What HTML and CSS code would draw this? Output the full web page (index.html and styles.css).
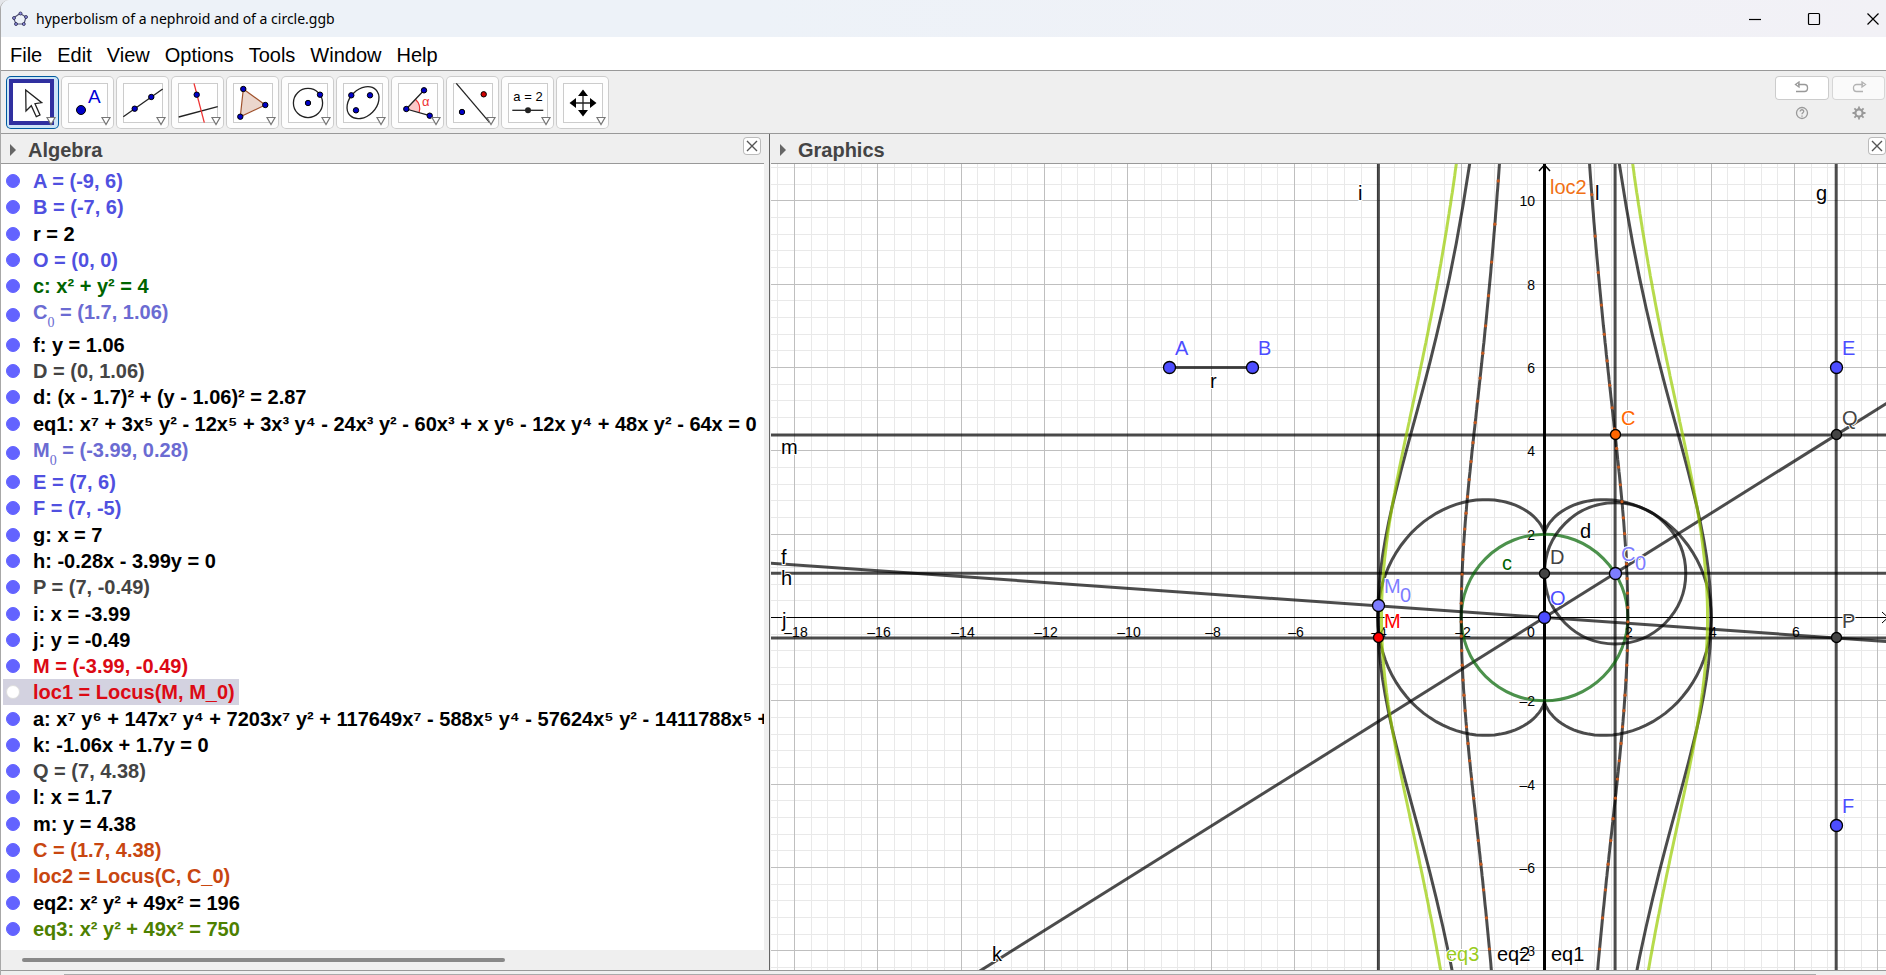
FILE: index.html
```html
<!DOCTYPE html>
<html lang="en">
<head>
<meta charset="utf-8">
<title>hyperbolism of a nephroid and of a circle.ggb</title>
<link rel="stylesheet" href="styles.css">
</head>
<body>
<div class="window">
  <header class="titlebar">
    <svg class="app-icon" width="18" height="18" viewBox="0 0 18 18" aria-hidden="true">
      <path d="M9 3.500 15 7l-2 7H5L2.500 8z" fill="none" stroke="#555577" stroke-width="1.200"/>
      <g fill="#8f8fe0" stroke="#26264d" stroke-width="0.800"><circle cx="9.500" cy="3.500" r="1.500"/><circle cx="15" cy="7" r="1.500"/><circle cx="12.800" cy="14" r="1.500"/><circle cx="5" cy="14" r="1.500"/><circle cx="3" cy="8" r="1.500"/></g>
    </svg>
    <h1 class="title">hyperbolism of a nephroid and of a circle.ggb</h1>
    <div class="controls">
      <button class="control" aria-label="Minimize"><svg width="14" height="14"><path d="M1 7.500h12"/></svg></button>
      <button class="control" aria-label="Maximize"><svg width="14" height="14"><rect x="1.500" y="1.500" width="11" height="11" rx="1"/></svg></button>
      <button class="control" aria-label="Close"><svg width="14" height="14"><path d="M1.500 1.500l11 11M12.500 1.500l-11 11"/></svg></button>
    </div>
  </header>

  <nav class="menu">
    <button>File</button><button>Edit</button><button>View</button><button>Options</button><button>Tools</button><button>Window</button><button>Help</button>
  </nav>

  <div class="toolbar">
    <div class="tools">
      <button class="tool selected" aria-label="Move"><svg viewBox="0 0 53 53"><rect x="5" y="5" width="41" height="42" fill="#fff" stroke="#3030a0" stroke-width="4"/><path d="M19.700 14 35.700 26.700 29 27.700 34 39 30.300 40.700 25.300 29.700 20 35z" fill="#fff" stroke="#222" stroke-width="1.300"/><use href="#drop"/></svg></button>
      <button class="tool" aria-label="Point"><svg viewBox="0 0 53 53"><use href="#frame"/><circle class="dot" cx="20" cy="34" r="4.500"/><text x="27" y="27" class="big-a">A</text><use href="#drop"/></svg></button>
      <button class="tool" aria-label="Line"><svg viewBox="0 0 53 53"><use href="#frame"/><path class="ink" d="M7.300 40.700 46.700 13"/><circle class="dot" cx="18.700" cy="32.700" r="2.700"/><circle class="dot" cx="35.300" cy="21" r="2.700"/><use href="#drop"/></svg></button>
      <button class="tool" aria-label="Perpendicular line"><svg viewBox="0 0 53 53"><use href="#frame"/><path class="ink" d="M7.700 41 46.700 30.700"/><path d="M23 7.300 33.300 46.700" stroke="#e33" stroke-width="1.300"/><circle class="dot" cx="25.700" cy="18.700" r="2.700"/><use href="#drop"/></svg></button>
      <button class="tool" aria-label="Polygon"><svg viewBox="0 0 53 53"><use href="#frame"/><path d="M17.300 13 39.300 29 14.300 40.700z" fill="#ebd6cc" stroke="#a0522d" stroke-width="1.200"/><circle class="dot" cx="17.300" cy="13" r="2.700"/><circle class="dot" cx="39.300" cy="29" r="2.700"/><circle class="dot" cx="14.300" cy="40.700" r="2.700"/><use href="#drop"/></svg></button>
      <button class="tool" aria-label="Circle"><svg viewBox="0 0 53 53"><use href="#frame"/><circle class="ink" cx="27" cy="27" r="14.600"/><circle class="dot" cx="27" cy="27" r="2.700"/><circle class="dot" cx="39" cy="18.700" r="2.700"/><use href="#drop"/></svg></button>
      <button class="tool" aria-label="Ellipse"><svg viewBox="0 0 53 53"><use href="#frame"/><ellipse class="ink" cx="27" cy="26.700" rx="18.200" ry="13.400" transform="rotate(-45 27 26.700)"/><circle class="dot" cx="15.300" cy="19.300" r="2.700"/><circle class="dot" cx="34" cy="19.300" r="2.700"/><circle class="dot" cx="20" cy="34.300" r="2.700"/><use href="#drop"/></svg></button>
      <button class="tool" aria-label="Angle"><svg viewBox="0 0 53 53"><use href="#frame"/><path d="M15.300 33 24.400 23.300A13.300 13.300 0 0 1 28.100 36.700z" fill="#fcc8c8"/><path d="M24.400 23.300A13.300 13.300 0 0 1 28.100 36.700" fill="none" stroke="#e33" stroke-width="1.200"/><path class="ink" d="M33 14.300 15.300 33 38.700 39.700"/><circle class="dot" cx="15.300" cy="33" r="2.700"/><circle class="dot" cx="33" cy="14.300" r="2.700"/><circle class="dot" cx="38.700" cy="39.700" r="2.700"/><text x="31" y="30" class="alpha">α</text><use href="#drop"/></svg></button>
      <button class="tool" aria-label="Reflect about line"><svg viewBox="0 0 53 53"><use href="#frame"/><path class="ink" d="M10.300 7.300 43.700 46.700"/><circle class="dot" cx="16" cy="36" r="2.700"/><circle class="dot red" cx="37.700" cy="18.300" r="2.700"/><use href="#drop"/></svg></button>
      <button class="tool" aria-label="Slider"><svg viewBox="0 0 53 53"><use href="#frame"/><text x="27" y="25" class="slider-text">a = 2</text><path class="ink" d="M11.300 34.300H42.300"/><circle cx="27" cy="34.300" r="3" fill="#222"/><use href="#drop"/></svg></button>
      <button class="tool" aria-label="Move graphics view"><svg viewBox="0 0 53 53"><use href="#frame"/><path class="ink" d="M27 18v18M18 27h18"/><path d="M27 13.500l5 6.500H22zM27 40.500l5-6.500H22zM13.500 27l6.500-5v10zM40.500 27l-6.500-5v10z"/><use href="#drop"/></svg></button>
    </div>
    <div class="actions">
      <button class="action" aria-label="Undo"><svg width="16" height="14"><path d="M4 3.500h6.500a3 3 0 0 1 3 3v1a3 3 0 0 1-3 3H2M5 1v5L1.500 3.500z"/></svg></button>
      <button class="action faded" aria-label="Redo"><svg width="16" height="14"><path d="M12 3.500H5.500a3 3 0 0 0-3 3v1a3 3 0 0 0 3 3H12M11 1v5l3.500-2.500z"/></svg></button>
      <button class="action plain" aria-label="Help"><svg width="14" height="14"><circle cx="7" cy="7" r="5.500"/><path d="M5.200 5.500c0-2.500 3.700-2.200 3.500 0-.1 1.300-1.700 1.300-1.700 2.800M7 9.500v1.200"/></svg></button>
      <button class="action plain" aria-label="Settings"><svg width="14" height="14"><circle cx="7" cy="7" r="3.600" stroke-width="2.200"/><path d="M7 .5v2.500M7 11v2.500M.5 7H3M11 7h2.500M2.400 2.400l1.800 1.800M9.800 9.800l1.800 1.800M2.400 11.600l1.800-1.800M9.800 4.200l1.800-1.800" stroke-width="1.800"/></svg></button>
    </div>
  </div>

  <main class="views">
    <section class="algebra">
      <div class="view-head"><button class="expand" aria-label="Toggle style bar"></button><h2>Algebra</h2><button class="close" aria-label="Close Algebra"><svg width="14" height="14"><path d="M2 2l10 10M12 2L2 12"/></svg></button></div>
      <ul class="list">
        <li class="blue"><label><input type="checkbox" checked><span>A = (-9, 6)</span></label></li>
        <li class="blue"><label><input type="checkbox" checked><span>B = (-7, 6)</span></label></li>
        <li><label><input type="checkbox" checked><span>r = 2</span></label></li>
        <li class="blue"><label><input type="checkbox" checked><span>O = (0, 0)</span></label></li>
        <li class="green"><label><input type="checkbox" checked><span>c: x² + y² = 4</span></label></li>
        <li class="soft tall"><label><input type="checkbox" checked><span>C<sub>0</sub> = (1.7, 1.06)</span></label></li>
        <li><label><input type="checkbox" checked><span>f: y = 1.06</span></label></li>
        <li class="gray"><label><input type="checkbox" checked><span>D = (0, 1.06)</span></label></li>
        <li><label><input type="checkbox" checked><span>d: (x - 1.7)² + (y - 1.06)² = 2.87</span></label></li>
        <li><label><input type="checkbox" checked><span>eq1: x⁷ + 3x⁵ y² - 12x⁵ + 3x³ y⁴ - 24x³ y² - 60x³ + x y⁶ - 12x y⁴ + 48x y² - 64x = 0</span></label></li>
        <li class="soft tall"><label><input type="checkbox" checked><span>M<sub>0</sub> = (-3.99, 0.28)</span></label></li>
        <li class="blue"><label><input type="checkbox" checked><span>E = (7, 6)</span></label></li>
        <li class="blue"><label><input type="checkbox" checked><span>F = (7, -5)</span></label></li>
        <li><label><input type="checkbox" checked><span>g: x = 7</span></label></li>
        <li><label><input type="checkbox" checked><span>h: -0.28x - 3.99y = 0</span></label></li>
        <li class="gray"><label><input type="checkbox" checked><span>P = (7, -0.49)</span></label></li>
        <li><label><input type="checkbox" checked><span>i: x = -3.99</span></label></li>
        <li><label><input type="checkbox" checked><span>j: y = -0.49</span></label></li>
        <li class="red"><label><input type="checkbox" checked><span>M = (-3.99, -0.49)</span></label></li>
        <li class="red current"><label><input type="checkbox"><span>loc1 = Locus(M, M_0)</span></label></li>
        <li><label><input type="checkbox" checked><span>a: x⁷ y⁶ + 147x⁷ y⁴ + 7203x⁷ y² + 117649x⁷ - 588x⁵ y⁴ - 57624x⁵ y² - 1411788x⁵ +</span></label></li>
        <li><label><input type="checkbox" checked><span>k: -1.06x + 1.7y = 0</span></label></li>
        <li class="gray"><label><input type="checkbox" checked><span>Q = (7, 4.38)</span></label></li>
        <li><label><input type="checkbox" checked><span>l: x = 1.7</span></label></li>
        <li><label><input type="checkbox" checked><span>m: y = 4.38</span></label></li>
        <li class="orange"><label><input type="checkbox" checked><span>C = (1.7, 4.38)</span></label></li>
        <li class="orange"><label><input type="checkbox" checked><span>loc2 = Locus(C, C_0)</span></label></li>
        <li><label><input type="checkbox" checked><span>eq2: x² y² + 49x² = 196</span></label></li>
        <li class="olive"><label><input type="checkbox" checked><span>eq3: x² y² + 49x² = 750</span></label></li>
      </ul>
      <div class="scroll"><div class="thumb"></div></div>
    </section>

    <section class="graphics">
      <div class="view-head"><button class="expand" aria-label="Toggle style bar"></button><h2>Graphics</h2><button class="close" aria-label="Close Graphics"><svg width="14" height="14"><path d="M2 2l10 10M12 2L2 12"/></svg></button></div>
      <svg class="plot" id="plot" role="img" aria-label="Coordinate plane">
        <g transform="translate(773 453)">
          <g id="grid"></g>
          <g id="ticks"></g>
          <g id="curves" transform="translate(.5 .5)"></g>
          <g id="points" transform="translate(.5 .5)"></g>
          <g id="labels"></g>
        </g>
      </svg>
    </section>
  </main>
  <footer class="bottom"><div></div></footer>
</div>

<svg width="0" height="0" class="defs" aria-hidden="true">
  <defs>
    <rect id="frame" x="7.500" y="7.500" width="39" height="39" fill="#fff" stroke="#ccc"/>
    <path id="drop" d="M41 41.500h8l-4 7z" fill="#fff" stroke="#777" stroke-width="1.200"/>
  </defs>
</svg>
<script src="plot.js"></script>
</body>
</html>
```

FILE: styles.css
```css
* { box-sizing: border-box; }

body {
  margin: 0;
  background: #e4e6ea;
  color: #000;
  font-family: "Liberation Sans", Arial, sans-serif;
  font-size: 20px;
}

button { padding: 0; border: 0; background: none; color: inherit; font: inherit; }
h1, h2, ul { margin: 0; padding: 0; }
.defs { position: absolute; }

.window {
  display: flex;
  flex-direction: column;
  height: 100vh;
  border-left: 1px solid #a8a8a8;
  border-top-left-radius: 9px;
  background: #efefef;
  overflow: hidden;
}

/* Title bar */
.titlebar {
  display: flex;
  align-items: center;
  height: 37px;
  flex: none;
  padding-left: 10px;
  background: linear-gradient(90deg, #edf2f8 40%, #f2f1f6);
}
.title {
  flex: 1;
  margin-left: 7px;
  font: 400 14px/20px "Noto Sans", "Open Sans", sans-serif;
}
.controls { display: flex; gap: 45px; padding-right: 6px; }
.control { display: flex; }
.control svg { fill: none; stroke: #000; stroke-width: 1.2; }

.menu {
  display: flex;
  gap: 15px;
  height: 33px;
  flex: none;
  padding: 3px 0 0 9px;
  background: #fff;
}

/* Toolbar */
.toolbar {
  display: flex;
  justify-content: space-between;
  flex: none;
  padding: 5px 1px 4px 5px;
  border: 1px solid #999;
  border-width: 1px 0;
}
.tools { display: flex; gap: 2px; }
.tool {
  width: 53px;
  height: 53px;
  border-radius: 5px;
  background: #fdfdfd;
  box-shadow: inset 0 0 0 1px #ccc;
}
.tool.selected { background: #cce4f7; box-shadow: inset 0 0 0 1px #005a9e; }
.tool svg { display: block; width: 100%; height: 100%; }
.ink { fill: none; stroke: #222; stroke-width: 1.3; }
.dot { fill: #0000c8; stroke: #000; }
.dot.red { fill: #d00000; }
.big-a { font-size: 19px; fill: #0000d8; }
.alpha { font-size: 13px; fill: #e33; }
.slider-text { font-size: 13px; text-anchor: middle; }

.actions {
  display: grid;
  grid-template-columns: 54px 53px;
  grid-template-rows: 24px 26px;
  column-gap: 3px;
}
.action {
  display: flex;
  align-items: center;
  justify-content: center;
  border-radius: 4px;
  background: #fff;
  box-shadow: inset 0 0 0 1px #ccc;
}
.action.faded { opacity: 0.7; }
.action.plain { background: none; box-shadow: none; }
.action svg { fill: none; stroke: #999; stroke-width: 1.3; }

/* Views */
.views {
  display: grid;
  grid-template-columns: minmax(0, 11fr) minmax(0, 16fr);
  flex: 1;
  min-height: 0;
}
.algebra, .graphics { display: flex; flex-direction: column; min-height: 0; }
.algebra { padding-right: 5px; }
.graphics { padding-left: 1px; border-left: 1px solid #666; }

.view-head {
  display: flex;
  align-items: center;
  height: 30px;
  flex: none;
  padding: 2px 3px 0 9px;
  border-bottom: 1px solid #999;
}
.graphics .view-head { padding: 2px 0 0 9px; }
.view-head h2 { flex: 1; margin-left: 12px; color: #444; font-size: 20px; line-height: 24px; }
.expand { border: solid transparent; border-width: 6px 0 6px 6px; border-left-color: #666; }
.close {
  display: flex;
  padding: 2px;
  margin-bottom: 8px;
  border-radius: 4px;
  background: #fff;
  box-shadow: inset 0 0 0 1px #bbb;
}
.close svg { fill: none; stroke: #555; stroke-width: 1.4; }

.list {
  display: flex;
  flex-direction: column;
  justify-content: space-between;
  flex: 1;
  min-height: 0;
  padding: 4px 0 8px 2px;
  background: #fff;
  list-style: none;
  overflow: hidden;
  font-weight: 700;
  white-space: nowrap;
}
.list label { display: inline-flex; align-items: center; height: 26px; padding: 0 4px 0 3px; }
.list .tall, .list .tall label { height: 32px; }
.list li { height: 26px; }
.list input {
  appearance: none;
  width: 14px;
  height: 14px;
  margin: 0 13px 0 0;
  border-radius: 50%;
  background: #fff;
  border: 1px solid #ddd;
}
.list input:checked { background: #6363ff; border-color: #6363ff; }
.list span { line-height: 24px; }
.list sub { font-size: 14px; line-height: 14px; vertical-align: -8px; font-family: "Liberation Serif", serif; font-weight: 400; }
.blue { color: #5050e0; }
.soft { color: #6b6bd2; }
.green { color: #006400; }
.gray { color: #444; }
.red { color: #dc0a14; }
.orange { color: #c84610; }
.olive { color: #4d8000; }
.current label { background: #d3d2e0; }

.scroll { height: 20px; flex: none; padding: 8px 21px; }
.thumb { width: 67%; height: 4px; border-radius: 2px; background: #888; }

.plot { display: block; width: 100%; flex: 1; min-height: 0; background: #fff; }
.minor { stroke: #e9e9e9; shape-rendering: crispEdges; }
.major { stroke: #bfbfbf; shape-rendering: crispEdges; }
.axis { fill: none; stroke: #000; }
.curve { fill: none; stroke: #000; stroke-opacity: 0.7; stroke-width: 3; }
.curve.circle { stroke: #006400; }
.curve.lime { stroke: #99cc00; }
.trace { fill: #c85a1e; }
.tick { font-size: 14px; text-anchor: middle; }
.tick.vertical { text-anchor: end; }
.label { font-size: 20px; paint-order: stroke; stroke: #fff; stroke-width: 2px; }
.point { stroke: #000; stroke-width: 1.3; }

.bottom { height: 5px; flex: none; padding: 3px 70px 0 63px; border-top: 1px solid #999; }
.bottom div { height: 1px; background: #aaa; }
```

FILE: plot.js
```js
const NS = "http://www.w3.org/2000/svg";
const UNIT = 41.67;
const X_MIN = -19, X_MAX = 30, Y_MIN = -20, Y_MAX = 10.9;

function add(parent, name, attrs, text) {
  const el = document.createElementNS(NS, name);
  for (const key in attrs) el.setAttribute(key, attrs[key]);
  if (text !== undefined) el.textContent = text;
  document.getElementById(parent).appendChild(el);
  return el;
}
const px = v => v * UNIT;
const path = pts => "M" + pts.map(p => px(p[0]).toFixed(1) + " " + px(-p[1]).toFixed(1)).join("L");

/* Grid: one major line every 2 units, five subdivisions between */
function gridLine(vertical, i) {
  const at = Math.round(px(i * 0.4)) + 0.5;
  const d = vertical ? `M${at} -453V2000` : `M-773 ${at}H2000`;
  add("grid", "path", { d, class: i % 5 === 0 ? "major" : "minor" });
}
for (const major of [false, true]) {
  for (let i = -46; i <= 70; i++) if ((i % 5 === 0) === major) gridLine(true, i);
  for (let i = -27; i <= 60; i++) if ((i % 5 === 0) === major) gridLine(false, i);
}

/* Axes */
add("grid", "path", { d: "M-773 .5H2000", class: "axis" });
add("grid", "path", { d: "M.5 -453V2000", class: "axis", "stroke-width": 3 });
add("grid", "path", { d: "M-5 -446 .5 -452 6 -446", class: "axis", "stroke-width": 1.5 });
const edge = document.getElementById("plot").clientWidth - 773;
add("grid", "path", { d: `M${edge - 4} -5L${edge + 2} .5L${edge - 4} 6`, class: "axis" });

/* Tick numbers */
const num = n => String(n).replace("-", "–");
for (let n = -18; n <= 6; n += 2) {
  if (n) add("ticks", "text", { x: Math.round(px(n)) + 2, y: 20, class: "tick" }, num(n));
}
add("ticks", "text", { x: -13, y: 20, class: "tick" }, "0");
for (let n = -8; n <= 10; n += 2) {
  if (n) add("ticks", "text", { x: -9, y: Math.round(px(-n)) + 6, class: "tick vertical" }, num(n));
}

/* Lines and curves */
const curve = (pts, extra = "") => add("curves", "path", { d: path(pts), class: "curve " + extra });
const A = [-9, 6], B = [-7, 6], C0 = [1.695, 1.061], M0 = [-3.987, 0.28];
const yQ = 7 * C0[1] / C0[0], yP = 7 * M0[1] / M0[0];

curve([A, B]);
for (const y of [C0[1], yP, yQ]) curve([[X_MIN, y], [X_MAX, y]]);
for (const x of [0, M0[0], C0[0], 7]) curve([[x, Y_MIN], [x, Y_MAX]]);
for (const s of [yQ / 7, yP / 7]) curve([[-20, -20 * s], [30, 30 * s]]);

const circle = (cx, cy, r, extra) =>
  add("curves", "circle", { cx: px(cx), cy: px(-cy), r: px(r), class: "curve " + extra });
circle(0, 0, 2, "circle");
circle(C0[0], C0[1], 1.695, "");

const hyper = (k, side) => {
  const pts = [];
  for (let y = -14; y <= 12; y += 0.1) pts.push([side * Math.sqrt(k / (y * y + 49)), y]);
  return pts;
};
const nephroid = [], left = [], right = [];
for (let d = 0; d <= 360; d += 2) {
  const t = d * Math.PI / 180;
  const x = 3 * Math.sin(t) - Math.sin(3 * t), y = 3 * Math.cos(t) - Math.cos(3 * t);
  nephroid.push([x, y]);
  if (Math.abs(x) > 0.5) (x < 0 ? left : right).push([x, 7 * y / x]);
}
curve(nephroid, "");
curve(left);
curve(right);

/* Sampled positions of loc2 */
for (const side of [-1, 1]) {
  curve(hyper(196, side));
  for (let k = -27; k <= 21; k++) {
    const shift = k > 0 && side < 0 ? 0 : -0.3;
    const t = (k + shift) * Math.PI / 64;
    const x = side * 2 * Math.cos(t), y = 7 * Math.tan(t);
    add("curves", "circle", { cx: px(x), cy: px(-y), r: 1.6, class: "trace" });
  }
  curve(hyper(750, side), "lime");
}

/* Labels */
const label = (x, y, text, fill = "#000") =>
  add("labels", "text", { x, y, fill, class: "label" }, text);
label(439, 224, "r");
label(587, 36, "i");
label(824, 36, "l");
label(1045, 36, "g");
label(779, 30, "loc2", "#f07014");
label(10, 290, "m");
label(10, 400, "f");
label(10, 421, "h");
label(11, 463, "j");
label(221, 797, "k");
label(731, 406, "c", "#006400");
label(809, 374, "d");
label(675, 797, "eq3", "#99cc20");
label(726, 797, "eq2");
label(780, 797, "eq1");
document.querySelectorAll("#labels text").forEach(t => {
  t.setAttribute("x", t.getAttribute("x") - 773);
  t.setAttribute("y", t.getAttribute("y") - 453);
});

/* Points */
const blue = "#4d4dff", soft = "#7d7dff", dark = "#444";
const points = [
  ["A", A, blue, 6], ["B", B, blue, 6], ["E", [7, 6], blue, 6], ["F", [7, -5], blue, 6],
  ["O", [0, 0], blue, 6], ["C", [C0[0], yQ], "#ff6600", 5], ["C", C0, soft, 6, "0"],
  ["D", [0, C0[1]], dark, 5], ["Q", [7, yQ], dark, 5], ["P", [7, yP], dark, 5],
  ["M", M0, soft, 6, "0"], ["M", [M0[0], yP], "#ff0000", 5]
];
for (const [name, [x, y], fill, r, sub] of points) {
  const cx = Math.round(px(x)), cy = Math.round(px(-y));
  add("points", "circle", { cx, cy, r, fill, class: "point" });
  label(cx + 6, cy - (r === 5 ? 9 : 12), name, fill);
  if (sub) label(cx + (name === "M" ? 22 : 20), cy - 3, sub, fill);
}
```
